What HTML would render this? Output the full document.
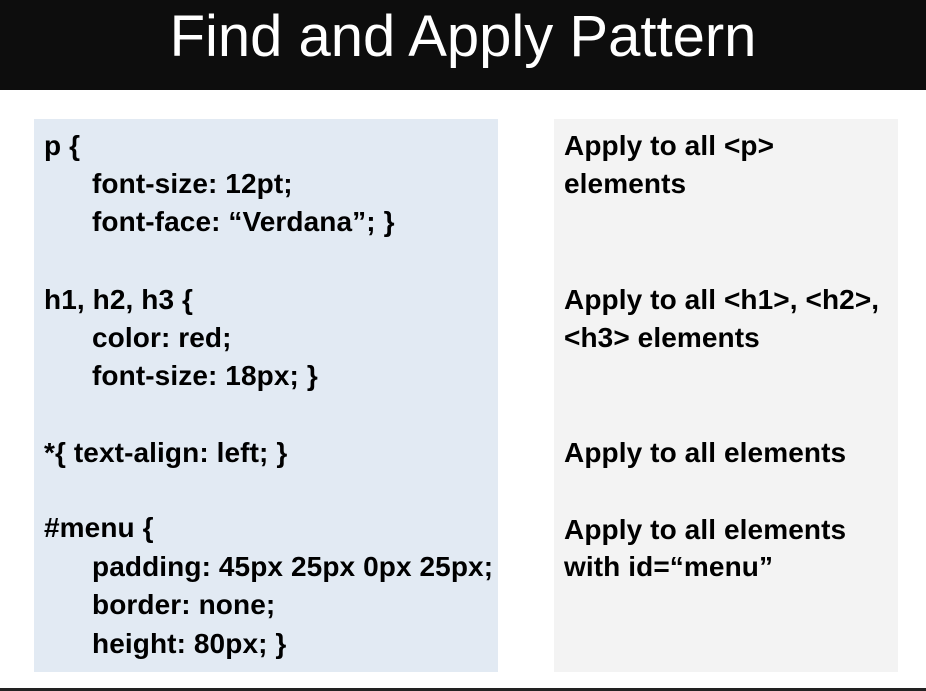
<!DOCTYPE html>
<html><head><style>
body{margin:0;width:926px;height:691px;background:#fff;position:relative;overflow:hidden;font-family:"Liberation Sans",Arial,sans-serif}
.hd{position:absolute;left:0;top:0;width:926px;height:90px;background:#0d0d0d;color:#fff;font-size:58px;text-align:center;line-height:74px}
.bl{position:absolute;left:34px;top:119px;width:464px;height:553px;background:#e2eaf3}
.br{position:absolute;left:554px;top:119px;width:344px;height:553px;background:#f3f3f3}
.l{position:absolute;font-weight:bold;font-size:28px;line-height:38px;color:#000;white-space:nowrap;letter-spacing:0.1px}
.ft{position:absolute;left:0;top:688px;width:926px;height:3px;background:#222}
</style></head><body>
<div class="hd">Find and Apply Pattern</div>
<div class="bl"></div><div class="br"></div>
<div class="l" style="left:44px;top:127px">p {</div>
<div class="l" style="left:92px;top:165px">font-size: 12pt;</div>
<div class="l" style="left:92px;top:203px">font-face: “Verdana”; }</div>
<div class="l" style="left:44px;top:281px">h1, h2, h3 {</div>
<div class="l" style="left:92px;top:319px">color: red;</div>
<div class="l" style="left:92px;top:357px">font-size: 18px; }</div>
<div class="l" style="left:44px;top:434px">*{ text-align: left; }</div>
<div class="l" style="left:44px;top:509px">#menu {</div>
<div class="l" style="left:92px;top:548px">padding: 45px 25px 0px 25px;</div>
<div class="l" style="left:92px;top:586px">border: none;</div>
<div class="l" style="left:92px;top:625px">height: 80px; }</div>
<div class="l" style="left:564px;top:127px">Apply to all &lt;p&gt;</div>
<div class="l" style="left:564px;top:165px">elements</div>
<div class="l" style="left:564px;top:281px">Apply to all &lt;h1&gt;, &lt;h2&gt;,</div>
<div class="l" style="left:564px;top:319px">&lt;h3&gt; elements</div>
<div class="l" style="left:564px;top:434px">Apply to all elements</div>
<div class="l" style="left:564px;top:511px">Apply to all elements</div>
<div class="l" style="left:564px;top:548px">with id=“menu”</div>
<div class="ft"></div>
</body></html>
